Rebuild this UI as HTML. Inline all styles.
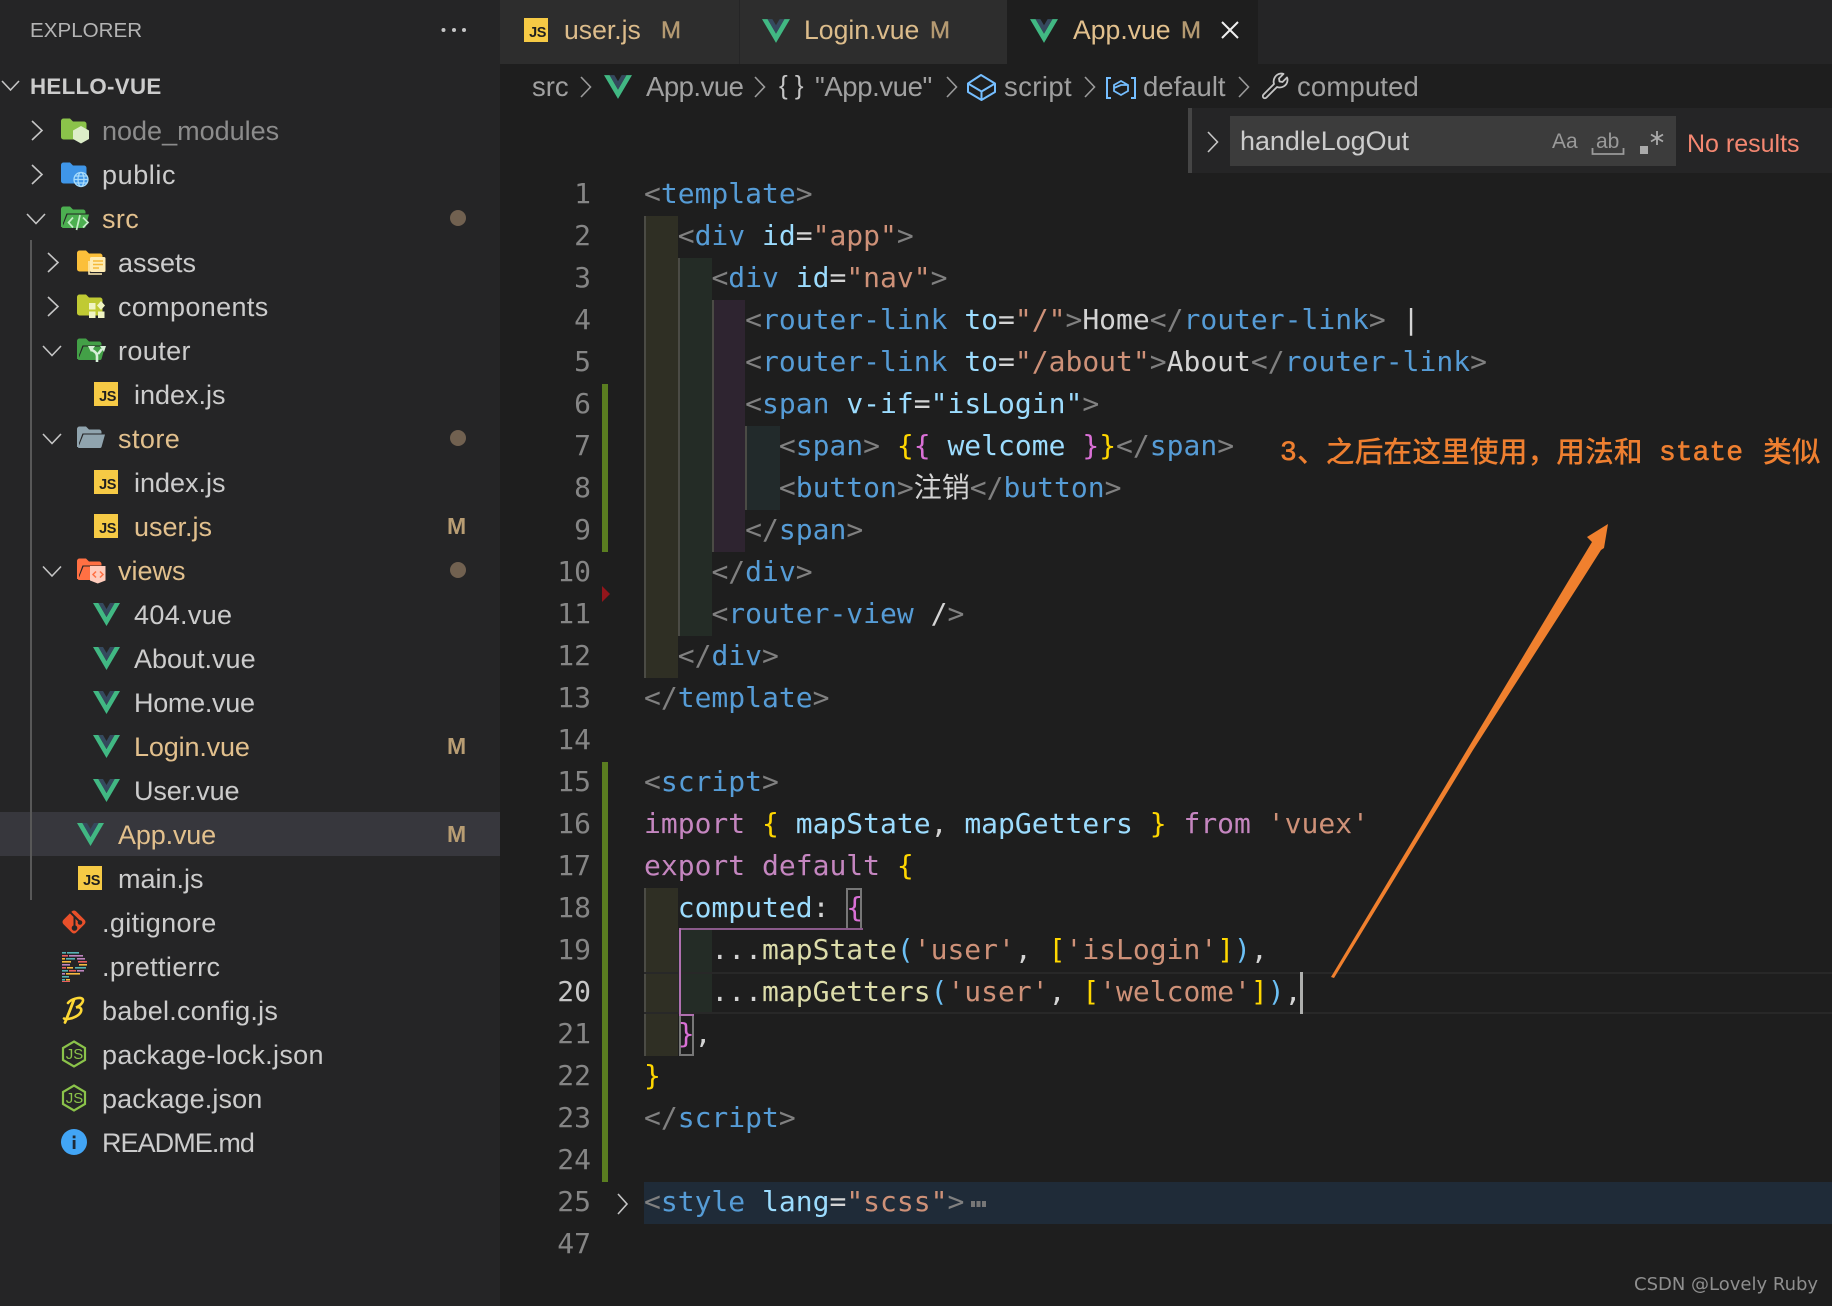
<!DOCTYPE html>
<html lang="en">
<head>
<meta charset="utf-8">
<title>App.vue - hello-vue</title>
<style>
html,body{margin:0;padding:0;background:#1e1e1e}
body{position:relative;width:1832px;height:1306px;overflow:hidden;font-family:"Liberation Sans","Noto Sans CJK SC",sans-serif}
div,span.x,svg{box-sizing:border-box}
.abs,.r,.l,.n,.ic,.m,.dot,.tx,.b{position:absolute}
#side{position:absolute;left:0;top:0;width:500px;height:1306px;background:#252526}
.r{line-height:44px;height:44px;font-size:27px;color:#ccc;white-space:pre;margin-top:1px;margin-left:-1px}
.mod{color:#e2c08d}
.m{left:447px;line-height:44px;font-size:23px;color:#b89d73;font-weight:bold;margin-top:1px}
.dot{left:450px;width:16px;height:16px;border-radius:50%;background:#716150}
.js{position:absolute;width:24px;height:24px;background:#f6ca45;color:#1f1f1f;font:bold 14.5px/14px "Liberation Sans",sans-serif;text-align:right;padding:8px 2px 0 0;letter-spacing:-.4px}
.tab{position:absolute;top:0;height:64px;background:#2d2d2d}
.tx{line-height:64px;font-size:26.6px;top:-2px;color:#dcbc8b;white-space:pre}
.tm{font-size:24px;color:#b59a72;-webkit-text-stroke:.4px #b59a72;top:-1px}
.b{top:66px;line-height:42px;font-size:27.5px;color:#a0a0a0;white-space:pre}
.l{left:644px;height:42px;line-height:42px;margin-top:-1px;font-family:"DejaVu Sans Mono","Noto Sans CJK SC",monospace;font-size:28px;color:#d4d4d4;white-space:pre}
.n{left:500px;width:91px;text-align:right;height:42px;line-height:42px;margin-top:-1px;font-family:"DejaVu Sans Mono",monospace;font-size:28px;color:#858585}
.g{color:#808080}.t{color:#569cd6}.a{color:#9cdcfe}.s{color:#ce9178}.p{color:#da70d6}.y{color:#ffd700}.f{color:#dcdcaa}.c{color:#6cc0f5}.k{color:#c586c0}
.ind{position:absolute;border-left:2px solid #4b4b45}
.an{position:absolute;top:431px;line-height:42px;color:#ee7f30;white-space:pre}
.cj{font:500 28.8px/42px "Noto Sans CJK SC",sans-serif;margin-top:-1px}
.mo{font:400 28px/42px "Liberation Mono",monospace;-webkit-text-stroke:.6px #ee7f30;margin-top:2px}
</style>
</head>
<body>
<svg width="0" height="0" style="position:absolute">
<defs>
<symbol id="vue" viewBox="0 0 27 23"><polygon fill="#41b883" points="0,0 5.4,0 13.5,14 21.6,0 27,0 13.5,23"/><polygon fill="#35495e" points="5.4,0 10,0 13.5,6 17,0 21.6,0 13.5,14"/></symbol>
<symbol id="hex" viewBox="0 0 26 28"><path d="M13 1.5 24 8v12l-11 6.5L2 20V8z" fill="none" stroke="#8bc34a" stroke-width="2.2"/><text x="13.5" y="19" text-anchor="middle" font-family="Liberation Sans,sans-serif" font-size="15" fill="#8bc34a">JS</text></symbol>
</defs>
</svg>

<!-- SIDEBAR -->
<div id="side"></div>
<div class="abs" style="left:30px;top:9px;line-height:44px;font-size:20.6px;color:#b4b4b4">EXPLORER</div>
<svg class="abs" style="left:440px;top:26px" width="28" height="8"><circle cx="3.5" cy="4" r="2" fill="#c5c5c5"/><circle cx="14" cy="4" r="2" fill="#c5c5c5"/><circle cx="24" cy="4" r="2" fill="#c5c5c5"/></svg>
<svg class="abs" style="left:0;top:78px" width="22" height="16"><path d="M2 3l8.5 9L19 3" fill="none" stroke="#c5c5c5" stroke-width="1.6"/></svg>
<div class="r" style="left:31px;top:64px;font-size:22.3px;font-weight:bold;color:#cccccc;letter-spacing:.3px">HELLO-VUE</div>

<div class="abs" style="left:0;top:812px;width:500px;height:44px;background:#37373d"></div>
<div class="abs" style="left:30px;top:240px;width:2px;height:660px;background:#585858"></div>

<!-- chevrons -->
<svg class="abs" style="left:0;top:0" width="70" height="600" fill="none" stroke="#c5c5c5" stroke-width="1.6">
<path d="M32 121l10 9.500-10 9.500"/><path d="M32 165l10 9.500-10 9.500"/>
<path d="M27 214l9 9.500 9-9.500"/>
<path d="M48 253l10 9.500-10 9.500"/><path d="M48 297l10 9.500-10 9.500"/>
<path d="M43 346l9 9.500 9-9.500"/>
<path d="M43 434l9 9.500 9-9.500"/>
<path d="M43 566.500l9 9.500 9-9.500"/>
</svg>

<!-- folder icons -->
<svg class="ic" style="left:60px;top:117px" width="30" height="27" viewBox="0 0 30 27"><path d="M1 4a2.500 2.500 0 0 1 2.500-2.500H10l3 3h11a2.500 2.500 0 0 1 2.500 2.500v13a2.500 2.500 0 0 1-2.500 2.500H3.500A2.500 2.500 0 0 1 1 20z" fill="#8bc34a"/><path d="M21 9l8 4.500v8.500l-8 4.500-8-4.500v-8.500z" fill="#dcedc8"/></svg>
<svg class="ic" style="left:60px;top:161px" width="30" height="27" viewBox="0 0 30 27"><path d="M1 4a2.500 2.500 0 0 1 2.500-2.500H10l3 3h11a2.500 2.500 0 0 1 2.500 2.500v13a2.500 2.500 0 0 1-2.500 2.500H3.500A2.500 2.500 0 0 1 1 20z" fill="#3f96e8"/><g fill="none" stroke="#a8dcfb" stroke-width="1.300"><circle cx="21" cy="18.500" r="7" fill="#3f96e8"/><ellipse cx="21" cy="18.500" rx="3" ry="7"/><path d="M14 18.500h14M15 15h12M15 22h12"/></g></svg>
<svg class="ic" style="left:60px;top:205px" width="30" height="27" viewBox="0 0 30 27"><path d="M1 4a2.500 2.500 0 0 1 2.500-2.500H10l3 3h10a2.500 2.500 0 0 1 2.500 2.500v1.500H6.500L3 18V22H1z" fill="#4caf50"/><path d="M7.500 9.500H29l-3.500 12.500a1.500 1.500 0 0 1-1.500 1H2z" fill="#4caf50"/><g fill="none" stroke="#c6ecc8" stroke-width="1.700"><path d="M13 12.500l-4.500 5 4.500 5M23 12.500l5 5-5 5M20 10l-3.500 15"/></g></svg>
<svg class="ic" style="left:76px;top:249px" width="30" height="27" viewBox="0 0 30 27"><path d="M1 4a2.500 2.500 0 0 1 2.500-2.500H10l3 3h11a2.500 2.500 0 0 1 2.500 2.500v13a2.500 2.500 0 0 1-2.500 2.500H3.500A2.500 2.500 0 0 1 1 20z" fill="#fbbf3a"/><rect x="14" y="8" width="15.500" height="15" rx="1.500" fill="#ffecb3"/><path d="M13 12v13h13" fill="none" stroke="#ffecb3" stroke-width="1.500"/><path d="M17 12h10M17 15.500h10M17 19h6" stroke="#f5b93a" stroke-width="1.500"/></svg>
<svg class="ic" style="left:76px;top:293px" width="30" height="27" viewBox="0 0 30 27"><path d="M1 4a2.500 2.500 0 0 1 2.500-2.500H10l3 3h11a2.500 2.500 0 0 1 2.500 2.500v13a2.500 2.500 0 0 1-2.500 2.500H3.500A2.500 2.500 0 0 1 1 20z" fill="#c0ca33"/><rect x="13" y="10" width="6.500" height="6.500" fill="#f0f4c3"/><rect x="13" y="18.500" width="6.500" height="6.500" fill="#f0f4c3"/><rect x="22" y="18.500" width="6.500" height="6.500" fill="#f0f4c3"/><path d="M25 8l4 4.500-4 4.500-4-4.500z" fill="#f0f4c3"/></svg>
<svg class="ic" style="left:76px;top:337px" width="30" height="27" viewBox="0 0 30 27"><path d="M1 4a2.500 2.500 0 0 1 2.500-2.500H10l3 3h10a2.500 2.500 0 0 1 2.500 2.500v1.500H6.500L3 18V22H1z" fill="#43a047"/><path d="M7.500 9.500H29l-3.500 12.500a1.500 1.500 0 0 1-1.500 1H2z" fill="#43a047"/><path d="M21 25v-6c0-3-3-5-5-6M22 17l4-5" fill="none" stroke="#d7efd8" stroke-width="2.600"/><path d="M12 9h7l-4 6zM24 9h6l-2 6z" fill="#d7efd8"/></svg>
<svg class="ic" style="left:76px;top:425px" width="30" height="27" viewBox="0 0 30 27"><path d="M1 4a2.500 2.500 0 0 1 2.500-2.500H10l3 3h10a2.500 2.500 0 0 1 2.500 2.500v1.500H6.500L3 18V22H1z" fill="#90a4ae"/><path d="M7.500 9.500H29l-3.500 12.500a1.500 1.500 0 0 1-1.500 1H2z" fill="#90a4ae"/></svg>
<svg class="ic" style="left:76px;top:557px" width="30" height="27" viewBox="0 0 30 27"><path d="M1 4a2.500 2.500 0 0 1 2.500-2.500H10l3 3h10a2.500 2.500 0 0 1 2.500 2.500v1.500H6.500L3 18V22H1z" fill="#ff7043"/><path d="M7.500 9.500H29l-3.500 12.500a1.500 1.500 0 0 1-1.500 1H2z" fill="#ff7043"/><path d="M14 9h15.500v14.500l-7.750 3-7.750-3z" fill="#ffccbc"/><path d="M20 14.500l-3 3 3 3M24 14.500l3 3-3 3" fill="none" stroke="#ff7043" stroke-width="1.500"/></svg>

<!-- file icons -->
<div class="js" style="left:94px;top:382px">JS</div>
<div class="js" style="left:94px;top:470px">JS</div>
<div class="js" style="left:94px;top:514px">JS</div>
<div class="js" style="left:78px;top:866px">JS</div>
<svg class="ic" style="left:92.500px;top:603px" width="27" height="23"><use href="#vue"/></svg>
<svg class="ic" style="left:92.500px;top:647px" width="27" height="23"><use href="#vue"/></svg>
<svg class="ic" style="left:92.500px;top:691px" width="27" height="23"><use href="#vue"/></svg>
<svg class="ic" style="left:92.500px;top:735px" width="27" height="23"><use href="#vue"/></svg>
<svg class="ic" style="left:92.500px;top:779px" width="27" height="23"><use href="#vue"/></svg>
<svg class="ic" style="left:76.500px;top:823px" width="27" height="23"><use href="#vue"/></svg>

<svg class="ic" style="left:60px;top:908px" width="28" height="28" viewBox="0 0 28 28"><rect x="5" y="5" width="18" height="18" rx="3" transform="rotate(45 14 14)" fill="#e9502a"/><path d="M9 3l5.500 5.500v11M14.500 8.500l6 6" stroke="#252526" stroke-width="2" fill="none"/><circle cx="14.500" cy="20" r="2.800" fill="#252526"/><circle cx="20" cy="14.500" r="2.300" fill="#252526"/></svg>

<svg class="ic" style="left:61px;top:951px" width="27" height="31" viewBox="0 0 27 31">
<rect x="1" y="1" width="4" height="1.600" fill="#56b3b4"/><rect x="6" y="1" width="12" height="1.600" fill="#56b3b4"/>
<rect x="1" y="4" width="6" height="1.600" fill="#ea5e5e"/><rect x="8" y="4" width="14" height="1.600" fill="#bf85bf"/>
<rect x="1" y="7" width="3" height="1.600" fill="#f7ba3e"/><rect x="5" y="7" width="9" height="1.600" fill="#56b3b4"/><rect x="16" y="7" width="8" height="1.600" fill="#bf85bf"/>
<rect x="1" y="10" width="9" height="1.600" fill="#f7ba3e"/><rect x="17" y="10" width="9" height="1.600" fill="#ea5e5e"/>
<rect x="1" y="13" width="8" height="1.600" fill="#bf85bf"/><rect x="18" y="13" width="8" height="1.600" fill="#f7ba3e"/>
<rect x="1" y="16" width="4" height="1.600" fill="#ea5e5e"/><rect x="6" y="16" width="6" height="1.600" fill="#f7ba3e"/><rect x="14" y="16" width="11" height="1.600" fill="#56b3b4"/>
<rect x="1" y="19" width="6" height="1.600" fill="#56b3b4"/><rect x="8" y="19" width="7" height="1.600" fill="#ea5e5e"/><rect x="16" y="19" width="7" height="1.600" fill="#bf85bf"/>
<rect x="1" y="22" width="3" height="1.600" fill="#bf85bf"/><rect x="5" y="22" width="14" height="1.600" fill="#f7ba3e"/>
<rect x="1" y="25" width="7" height="1.600" fill="#56b3b4"/>
<rect x="1" y="28" width="3" height="1.600" fill="#56b3b4"/><rect x="5" y="28" width="4" height="1.600" fill="#f7ba3e"/>
<rect x="1" y="30" width="8" height="1" fill="#ea5e5e"/>
</svg>

<svg class="ic" style="left:62px;top:996px" width="24" height="28" viewBox="0 0 24 28" fill="none" stroke="#fdd835" stroke-linecap="round"><path d="M6 7C9 3 17 1 20 2.500c3 2-1 7-6 9 4-1 6 1 5 4-1.500 4-8 7-13 7.500-2 .2-3.500 0-4-.5" stroke-width="2.600"/><path d="M12 3.500C10 9 7 17 3 26.500" stroke-width="2.800"/></svg>

<svg class="ic" style="left:61px;top:1040px" width="26" height="28"><use href="#hex"/></svg>
<svg class="ic" style="left:61px;top:1084px" width="26" height="28"><use href="#hex"/></svg>

<svg class="ic" style="left:61px;top:1129px" width="26" height="26" viewBox="0 0 26 26"><circle cx="13" cy="13" r="13" fill="#42a5f5"/><rect x="11.700" y="11" width="2.800" height="9" fill="#1e2a36"/><rect x="11.700" y="6.500" width="2.800" height="2.800" fill="#1e2a36"/></svg>

<!-- file labels -->
<div class="r" style="left:103px;top:108px;color:#8c8c8c">node_modules</div>
<div class="r" style="left:103px;top:152px;letter-spacing:.58px">public</div>
<div class="r mod" style="left:103px;top:196px;letter-spacing:.4px">src</div>
<div class="r" style="left:119px;top:240px">assets</div>
<div class="r" style="left:119px;top:284px;letter-spacing:.35px">components</div>
<div class="r" style="left:119px;top:328px;letter-spacing:.4px">router</div>
<div class="r" style="left:135px;top:372px">index.js</div>
<div class="r mod" style="left:119px;top:416px;letter-spacing:.45px">store</div>
<div class="r" style="left:135px;top:460px">index.js</div>
<div class="r mod" style="left:135px;top:504px">user.js</div>
<div class="r mod" style="left:119px;top:548px">views</div>
<div class="r" style="left:135px;top:592px;letter-spacing:.33px">404.vue</div>
<div class="r" style="left:135px;top:636px">About.vue</div>
<div class="r" style="left:135px;top:680px;letter-spacing:-.3px">Home.vue</div>
<div class="r mod" style="left:135px;top:724px;letter-spacing:-.15px">Login.vue</div>
<div class="r" style="left:135px;top:768px;letter-spacing:-.15px">User.vue</div>
<div class="r mod" style="left:119px;top:812px;letter-spacing:-.15px">App.vue</div>
<div class="r" style="left:119px;top:856px">main.js</div>
<div class="r" style="left:103px;top:900px;letter-spacing:.35px">.gitignore</div>
<div class="r" style="left:103px;top:944px;letter-spacing:.4px">.prettierrc</div>
<div class="r" style="left:103px;top:988px;letter-spacing:.23px">babel.config.js</div>
<div class="r" style="left:103px;top:1032px;letter-spacing:.34px">package-lock.json</div>
<div class="r" style="left:103px;top:1076px;letter-spacing:.1px">package.json</div>
<div class="r" style="left:103px;top:1120px;letter-spacing:-.95px">README.md</div>

<div class="dot" style="top:210px"></div>
<div class="dot" style="top:430px"></div>
<div class="dot" style="top:562px"></div>
<div class="m" style="top:503px">M</div>
<div class="m" style="top:723px">M</div>
<div class="m" style="top:811px">M</div>

<!-- TABS -->
<div class="abs" style="left:500px;top:0;width:1332px;height:64px;background:#252526"></div>
<div class="tab" style="left:500px;width:239px"></div>
<div class="tab" style="left:740px;width:267px"></div>
<div class="tab" style="left:1007px;width:251px;background:#1e1e1e"></div>
<div class="js" style="left:524px;top:18px">JS</div>
<div class="tx" style="left:564px">user.js</div>
<div class="tx tm" style="left:661px">M</div>
<svg class="ic" style="left:762px;top:19px" width="28" height="24"><use href="#vue"/></svg>
<div class="tx" style="left:804px">Login.vue</div>
<div class="tx tm" style="left:930px">M</div>
<svg class="ic" style="left:1030px;top:19px" width="28" height="24"><use href="#vue"/></svg>
<div class="tx" style="left:1073px;color:#e2c08d">App.vue</div>
<div class="tx tm" style="left:1181px">M</div>
<svg class="ic" style="left:1220px;top:20px" width="20" height="20"><path d="M2 2l16 16M18 2L2 18" stroke="#f0f0f0" stroke-width="2"/></svg>

<!-- BREADCRUMB -->
<div class="b" style="left:532px">src</div>
<svg class="ic" style="left:0;top:64px" width="1300" height="46" fill="none" stroke="#9a9a9a" stroke-width="1.600">
<path d="M581 13l9.500 10-9.500 10"/><path d="M755 13l9.500 10-9.500 10"/><path d="M947 13l9.500 10-9.500 10"/><path d="M1085 13l9.500 10-9.500 10"/><path d="M1239 13l9.500 10-9.500 10"/>
</svg>
<svg class="ic" style="left:604px;top:75px" width="28" height="24"><use href="#vue"/></svg>
<div class="b" style="left:646px;letter-spacing:-.5px">App.vue</div>
<div class="b" style="left:779px;color:#c5c5c5;top:64px;font-size:26px">{ }</div>
<div class="b" style="left:815px;letter-spacing:-.4px">"App.vue"</div>
<svg class="ic" style="left:966px;top:73px" width="31" height="29" viewBox="0 0 31 29" fill="none" stroke="#75beff" stroke-width="2" stroke-linejoin="round"><path d="M15 2L29 10.500V19L15.500 27 2 19V10.500zM2 10.500L15.500 18.500 29 10.500M15.500 18.500V27"/></svg>
<div class="b" style="left:1004px;letter-spacing:.4px">script</div>
<svg class="ic" style="left:1105px;top:76px" width="32" height="24" viewBox="0 0 32 24" fill="none" stroke="#75beff" stroke-width="2"><path d="M6 2H2v20h4M26 2h4v20h-4"/><path d="M16 5l7 4v6l-7 4-7-4V9zM9 12l7-3 7 0" stroke-width="1.800"/></svg>
<div class="b" style="left:1143px">default</div>
<svg class="ic" style="left:1261px;top:72px" width="28" height="28" viewBox="0 0 28 28" fill="none" stroke="#c5c5c5" stroke-width="1.800" stroke-linejoin="round"><path d="M2.500 22.500 13 12C11.500 7.500 14.500 2 20 1.500c1 0 2 .1 2.500.4L18 6.500l.5 3 3 .5L26 5.500c.5 1 .6 2 .5 3C26 14 20.500 16.500 16 15L5.500 25.500c-1 1-2.200 1-3 .2s-.9-2.300 0-3.200z"/></svg>
<div class="b" style="left:1297px;letter-spacing:.15px">computed</div>

<!-- INDENT GUIDES -->
<div class="ind" style="left:644px;top:216px;width:34px;height:462px;background:#2f2f24"></div>
<div class="ind" style="left:678px;top:258px;width:34px;height:378px;background:#242c26"></div>
<div class="ind" style="left:712px;top:300px;width:33px;height:252px;background:#2e2430"></div>
<div class="ind" style="left:745px;top:426px;width:35px;height:84px;background:#222a2b"></div>
<div class="ind" style="left:644px;top:888px;width:34px;height:168px;background:#2f2f24"></div>
<div class="ind" style="left:678px;top:930px;width:34px;height:84px;background:#242c26;border-left:none"></div>

<!-- current line + fold -->
<div class="abs" style="left:644px;top:972px;width:1188px;height:42px;border-top:2px solid #282828;border-bottom:2px solid #282828"></div>
<div class="abs" style="left:644px;top:1182px;width:1188px;height:42px;background:#1f2b38"></div>

<!-- bracket guides -->
<div class="abs" style="left:846px;top:888px;width:16px;height:42px;border:2px solid #777"></div>
<div class="abs" style="left:679px;top:1014px;width:15px;height:42px;border:2px solid #777;border-top:none"></div>
<div class="abs" style="left:679px;top:928px;width:184px;height:2px;background:#8a5a8a"></div>
<div class="abs" style="left:679px;top:928px;width:2px;height:88px;background:#b070b0"></div>
<div class="abs" style="left:679px;top:1014px;width:15px;height:2px;background:#b070b0"></div>

<!-- git gutter -->
<div class="abs" style="left:602px;top:384px;width:6px;height:168px;background:#5a7d20"></div>
<div class="abs" style="left:602px;top:762px;width:6px;height:420px;background:#5a7d20"></div>
<svg class="ic" style="left:602px;top:586px" width="9" height="16"><path d="M0 0l8 8-8 8z" fill="#94151b"/></svg>
<svg class="ic" style="left:615px;top:1192px" width="16" height="24"><path d="M3 2l9 10-9 10" fill="none" stroke="#c5c5c5" stroke-width="1.600"/></svg>

<!-- line numbers -->
<div class="n" style="top:174px">1</div><div class="n" style="top:216px">2</div><div class="n" style="top:258px">3</div><div class="n" style="top:300px">4</div><div class="n" style="top:342px">5</div><div class="n" style="top:384px">6</div><div class="n" style="top:426px">7</div><div class="n" style="top:468px">8</div><div class="n" style="top:510px">9</div><div class="n" style="top:552px">10</div><div class="n" style="top:594px">11</div><div class="n" style="top:636px">12</div><div class="n" style="top:678px">13</div><div class="n" style="top:720px">14</div><div class="n" style="top:762px">15</div><div class="n" style="top:804px">16</div><div class="n" style="top:846px">17</div><div class="n" style="top:888px">18</div><div class="n" style="top:930px">19</div><div class="n" style="top:972px;color:#c6c6c6">20</div><div class="n" style="top:1014px">21</div><div class="n" style="top:1056px">22</div><div class="n" style="top:1098px">23</div><div class="n" style="top:1140px">24</div><div class="n" style="top:1182px">25</div><div class="n" style="top:1224px">47</div>

<!-- code -->
<div class="l" style="top:174px"><span class="g">&lt;</span><span class="t">template</span><span class="g">&gt;</span></div>
<div class="l" style="top:216px">  <span class="g">&lt;</span><span class="t">div</span> <span class="a">id</span>=<span class="s">"app"</span><span class="g">&gt;</span></div>
<div class="l" style="top:258px">    <span class="g">&lt;</span><span class="t">div</span> <span class="a">id</span>=<span class="s">"nav"</span><span class="g">&gt;</span></div>
<div class="l" style="top:300px">      <span class="g">&lt;</span><span class="t">router-link</span> <span class="a">to</span>=<span class="s">"/"</span><span class="g">&gt;</span>Home<span class="g">&lt;/</span><span class="t">router-link</span><span class="g">&gt;</span> |</div>
<div class="l" style="top:342px">      <span class="g">&lt;</span><span class="t">router-link</span> <span class="a">to</span>=<span class="s">"/about"</span><span class="g">&gt;</span>About<span class="g">&lt;/</span><span class="t">router-link</span><span class="g">&gt;</span></div>
<div class="l" style="top:384px">      <span class="g">&lt;</span><span class="t">span</span> <span class="a">v-if</span>=<span class="a">"isLogin"</span><span class="g">&gt;</span></div>
<div class="l" style="top:426px">        <span class="g">&lt;</span><span class="t">span</span><span class="g">&gt;</span> <span class="y">{</span><span class="p">{</span> <span class="a">welcome</span> <span class="p">}</span><span class="y">}</span><span class="g">&lt;/</span><span class="t">span</span><span class="g">&gt;</span></div>
<div class="l" style="top:468px">        <span class="g">&lt;</span><span class="t">button</span><span class="g">&gt;</span>注销<span class="g">&lt;/</span><span class="t">button</span><span class="g">&gt;</span></div>
<div class="l" style="top:510px">      <span class="g">&lt;/</span><span class="t">span</span><span class="g">&gt;</span></div>
<div class="l" style="top:552px">    <span class="g">&lt;/</span><span class="t">div</span><span class="g">&gt;</span></div>
<div class="l" style="top:594px">    <span class="g">&lt;</span><span class="t">router-view</span> /<span class="g">&gt;</span></div>
<div class="l" style="top:636px">  <span class="g">&lt;/</span><span class="t">div</span><span class="g">&gt;</span></div>
<div class="l" style="top:678px"><span class="g">&lt;/</span><span class="t">template</span><span class="g">&gt;</span></div>
<div class="l" style="top:762px"><span class="g">&lt;</span><span class="t">script</span><span class="g">&gt;</span></div>
<div class="l" style="top:804px"><span class="k">import</span> <span class="y">{</span> <span class="a">mapState</span>, <span class="a">mapGetters</span> <span class="y">}</span> <span class="k">from</span> <span class="s">'vuex'</span></div>
<div class="l" style="top:846px"><span class="k">export</span> <span class="k">default</span> <span class="y">{</span></div>
<div class="l" style="top:888px">  <span class="a">computed</span>: <span class="p">{</span></div>
<div class="l" style="top:930px">    ...<span class="f">mapState</span><span class="c">(</span><span class="s">'user'</span>, <span class="y">[</span><span class="s">'isLogin'</span><span class="y">]</span><span class="c">)</span>,</div>
<div class="l" style="top:972px">    ...<span class="f">mapGetters</span><span class="c">(</span><span class="s">'user'</span>, <span class="y">[</span><span class="s">'welcome'</span><span class="y">]</span><span class="c">)</span>,</div>
<div class="l" style="top:1014px">  <span class="p">}</span>,</div>
<div class="l" style="top:1056px"><span class="y">}</span></div>
<div class="l" style="top:1098px"><span class="g">&lt;/</span><span class="t">script</span><span class="g">&gt;</span></div>
<div class="l" style="top:1182px"><span class="g">&lt;</span><span class="t">style</span> <span class="a">lang</span>=<span class="s">"scss"</span><span class="g">&gt;</span></div>
<svg class="ic" style="left:970px;top:1200px" width="18" height="8"><rect x="1" y="1" width="4" height="6" fill="#777"/><rect x="6.500" y="1" width="4" height="6" fill="#777"/><rect x="12" y="1" width="4" height="6" fill="#777"/></svg>
<div class="abs" style="left:1300px;top:972px;width:3px;height:42px;background:#aeafad"></div>

<!-- FIND WIDGET -->
<div class="abs" style="left:1188px;top:108px;width:644px;height:65px;background:#252526;border-left:4px solid #454545"></div>
<svg class="ic" style="left:1206px;top:130px" width="14" height="24"><path d="M2 2l9.500 10L2 22" fill="none" stroke="#c5c5c5" stroke-width="1.600"/></svg>
<div class="abs" style="left:1230px;top:116px;width:446px;height:50px;background:#3c3c3c"></div>
<div class="abs" style="left:1240px;top:117px;line-height:48px;font-size:26.9px;color:#cccccc">handleLogOut</div>
<div class="abs" style="left:1552px;top:118px;line-height:48px;font-size:21px;color:#9a9a9a">Aa</div>
<div class="abs" style="left:1596px;top:118px;line-height:48px;font-size:21px;color:#9a9a9a">ab</div>
<svg class="ic" style="left:1591px;top:146px" width="34" height="10"><path d="M1.500 2v6h31V2" fill="none" stroke="#9a9a9a" stroke-width="1.800"/></svg>
<div class="abs" style="left:1640px;top:146px;width:8px;height:8px;background:#aaa"></div>
<svg class="ic" style="left:1649px;top:130px" width="16" height="16"><path d="M8 1v14M2 4.500l12 7M14 4.500l-12 7" stroke="#aaa" stroke-width="1.800"/></svg>
<div class="abs" style="left:1687px;top:120px;line-height:48px;font-size:25px;color:#f48771">No results</div>

<!-- ANNOTATION -->
<div class="an mo" style="left:1280px">3</div>
<div class="an cj" style="left:1297px">、之后在这里使用，用法和</div>
<div class="an mo" style="left:1659px">state</div>
<div class="an cj" style="left:1763px">类似</div>
<svg class="abs" style="left:0;top:0" width="1832" height="1306"><polygon fill="#f0802e" points="1331,977 1334,978 1473,750 1582,580 1601,550 1604,548 1608,524 1587,537 1592,542 1569,580 1467,750"/></svg>

<!-- WATERMARK -->
<div class="abs" style="left:1634px;top:1270px;line-height:30px;font-family:'DejaVu Sans',sans-serif;font-size:18px;color:#8f8f8f;white-space:pre">CSDN @Lovely Ruby</div>
</body>
</html>
